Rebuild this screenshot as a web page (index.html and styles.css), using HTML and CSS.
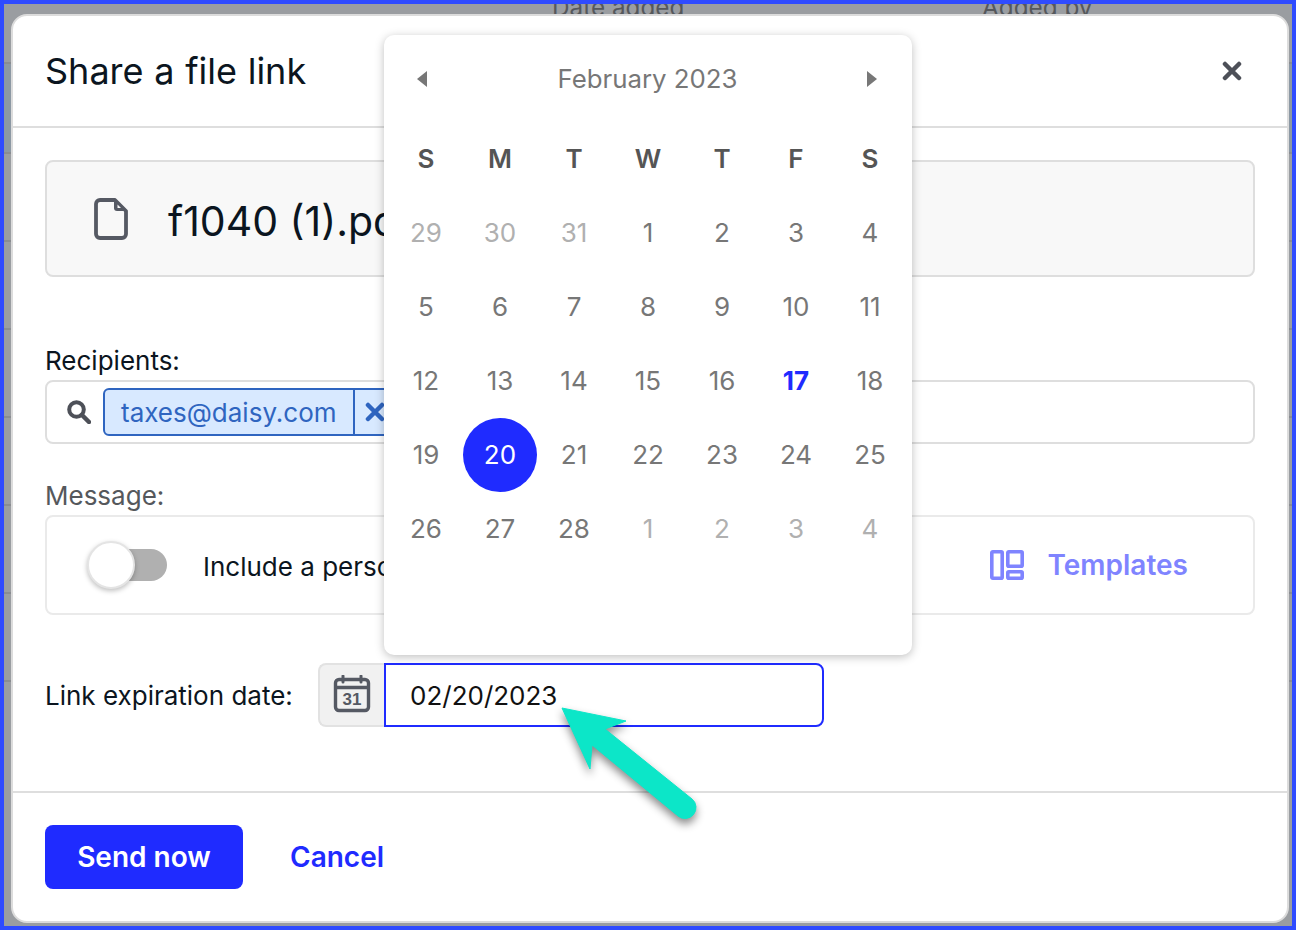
FILE: index.html
```html
<!DOCTYPE html>
<html>
<head>
    <title>Share a file link</title>
    <link rel="stylesheet" href="styles.css">
</head>
<body>
<div class="frame">
    <!-- table behind the dialog -->
    <div class="table-bg">
        <div class="table-head">
            <span class="col-date">Date added</span>
            <span class="col-by">Added by</span>
        </div>
        <div class="table-row tinted"></div>
        <div class="table-row"></div>
        <div class="table-row"></div>
        <div class="table-row"></div>
        <div class="table-row"></div>
        <div class="table-row"></div>
        <div class="table-row"></div>
    </div>

    <div class="modal">
        <div class="modal-header">
            <h1 class="modal-title">Share a file link</h1>
            <svg class="close-icon" width="20" height="20" viewBox="0 0 20 20">
                <path d="M3 3l14 14M17 3L3 17" fill="none" stroke="#4d5058" stroke-width="4.5" stroke-linecap="round"/>
            </svg>
        </div>

        <div class="modal-body">
            <div class="file-box">
                <svg class="file-icon" width="34" height="42" viewBox="0 0 34 42">
                    <path d="M6 2h15l11 11v23a4 4 0 0 1-4 4H6a4 4 0 0 1-4-4V6a4 4 0 0 1 4-4z" fill="none" stroke="#555963" stroke-width="3.800" stroke-linejoin="round"/>
                    <path d="M20 2v8a3 3 0 0 0 3 3h9z" fill="#555963"/>
                    <path d="M23.500 6.500v3.500h3.500z" fill="#f8f8f8"/>
                </svg>
                <span class="file-name">f1040 (1).pdf</span>
            </div>

            <div class="field-label recipients-label">Recipients:</div>
            <div class="recipients">
                <svg class="search-icon" width="24" height="24" viewBox="0 0 24 24">
                    <circle cx="9.500" cy="9.500" r="7.300" fill="none" stroke="#4d5058" stroke-width="4"/>
                    <path d="M15 15l7 7" stroke="#4d5058" stroke-width="4.500" stroke-linecap="round"/>
                </svg>
                <div class="chip">
                    <span class="chip-text">taxes@daisy.com</span>
                    <span class="chip-remove">
                        <svg width="20" height="20" viewBox="0 0 20 20">
                            <path d="M3 3l14 14M17 3L3 17" fill="none" stroke="#2f65c0" stroke-width="4.500" stroke-linecap="round"/>
                        </svg>
                    </span>
                </div>
            </div>

            <div class="field-label message-label">Message:</div>
            <div class="message-box">
                <div class="toggle"><div class="toggle-knob"></div></div>
                <span class="message-text">Include a personal message</span>
                <div class="templates">
                    <svg width="34" height="30" viewBox="0 0 34 30">
                        <rect x="1.800" y="1.800" width="10.400" height="26.400" rx="1" fill="none" stroke="#7f84ff" stroke-width="3.600"/>
                        <rect x="17.800" y="1.800" width="14.400" height="14.400" rx="1" fill="none" stroke="#7f84ff" stroke-width="3.600"/>
                        <rect x="17.800" y="21.800" width="14.400" height="6.400" rx="1" fill="none" stroke="#7f84ff" stroke-width="3.600"/>
                    </svg>
                    <span>Templates</span>
                </div>
            </div>

            <div class="expiry-row">
                <span class="expiry-label">Link expiration date:</span>
                <div class="date-group">
                    <div class="date-prefix">
                        <svg width="38" height="38" viewBox="0 0 38 38">
                            <path d="M10 1v6M28 1v6" stroke="#555963" stroke-width="3" stroke-linecap="round"/>
                            <rect x="2.500" y="4.500" width="33" height="31" rx="3.500" fill="none" stroke="#555963" stroke-width="3.400"/>
                            <path d="M2 12.500h34" stroke="#555963" stroke-width="3.400"/>
                            <text x="19" y="30" text-anchor="middle" class="cal-num">31</text>
                        </svg>
                    </div>
                    <div class="date-input">02/20/2023</div>
                </div>
            </div>
        </div>

        <div class="modal-footer">
            <a class="send-btn">Send now</a>
            <a class="cancel-link">Cancel</a>
        </div>

        <!-- datepicker dropdown -->
        <div class="calendar">
            <div class="cal-head">
                <svg width="10" height="16" viewBox="0 0 10 16"><path d="M10 0v16L0 8z" fill="#777"/></svg>
                <span class="cal-month">February 2023</span>
                <svg width="10" height="16" viewBox="0 0 10 16"><path d="M0 0v16l10-8z" fill="#777"/></svg>
            </div>
            <div class="cal-grid">
                <div class="cal-dow">S</div><div class="cal-dow">M</div><div class="cal-dow">T</div><div class="cal-dow">W</div><div class="cal-dow">T</div><div class="cal-dow">F</div><div class="cal-dow">S</div>
                <div class="cal-day muted">29</div><div class="cal-day muted">30</div><div class="cal-day muted">31</div><div class="cal-day">1</div><div class="cal-day">2</div><div class="cal-day">3</div><div class="cal-day">4</div>
                <div class="cal-day">5</div><div class="cal-day">6</div><div class="cal-day">7</div><div class="cal-day">8</div><div class="cal-day">9</div><div class="cal-day">10</div><div class="cal-day">11</div>
                <div class="cal-day">12</div><div class="cal-day">13</div><div class="cal-day">14</div><div class="cal-day">15</div><div class="cal-day">16</div><div class="cal-day today">17</div><div class="cal-day">18</div>
                <div class="cal-day">19</div><div class="cal-day selected">20</div><div class="cal-day">21</div><div class="cal-day">22</div><div class="cal-day">23</div><div class="cal-day">24</div><div class="cal-day">25</div>
                <div class="cal-day">26</div><div class="cal-day">27</div><div class="cal-day">28</div><div class="cal-day muted">1</div><div class="cal-day muted">2</div><div class="cal-day muted">3</div><div class="cal-day muted">4</div>
            </div>
        </div>
    </div>

    <!-- annotation arrow -->
    <svg class="arrow" width="170" height="150" viewBox="0 0 170 150">
        <path d="M12 8L76 21L55 29L142 99A11 11 0 0 1 128 116L42 45L40 69Z" fill="#0ce6c8" stroke="#0ce6c8" stroke-width="1" stroke-linejoin="round"/>
    </svg>
</div>
</body>
</html>
```

FILE: styles.css
```css
* {
    box-sizing: border-box;
}
html, body {
    margin: 0;
    padding: 0;
}
body {
    font-family: Inter, "Liberation Sans", sans-serif;
    color: #0b1520;
}
a {
    cursor: pointer;
}

.frame {
    position: relative;
    width: 1296px;
    height: 930px;
    overflow: hidden;
    background: #9a9da1;
    border: 4px solid #2f4bff;
}

/* table behind the dialog */
.table-head {
    height: 69px;
    margin-top: -9px;
    padding-left: 548px;
    display: flex;
    border-bottom: 2px solid #8a8d91;
    font-size: 24.300px;
    line-height: 24px;
    color: #55585c;
}
.col-date {
    width: 430px;
}
.table-row {
    height: 88px;
    border-bottom: 2px solid #8a8d91;
}
.table-row.tinted {
    height: 90px;
    background: #8c98a3;
}

/* dialog */
.modal {
    position: absolute;
    left: 7px;
    top: 10px;
    width: 1278px;
    height: 909px;
    display: flex;
    flex-direction: column;
    background: #fff;
    border: 2px solid #dcdcdc;
    border-radius: 16px;
}
.modal-header {
    height: 112px;
    flex: none;
    display: flex;
    align-items: center;
    justify-content: space-between;
    padding: 0 45px 0 32px;
    border-bottom: 2px solid #dedede;
}
.modal-title {
    margin: 0;
    font-size: 36px;
    font-weight: 400;
    word-spacing: 0.600px;
}
.modal-body {
    flex: 1;
    padding: 32px 32px 0;
}
.file-box {
    height: 117px;
    display: flex;
    align-items: center;
    padding-left: 47px;
    background: #f8f8f8;
    border: 2px solid #dedede;
    border-radius: 8px;
}
.file-name {
    margin-left: 40px;
    padding-top: 4px;
    font-size: 41px;
}
.field-label {
    font-size: 26px;
    line-height: 32px;
    margin-bottom: 3px;
}
.recipients-label {
    margin-top: 68px;
}
.message-label {
    margin-top: 36px;
    color: #55585c;
}
.recipients {
    height: 64px;
    display: flex;
    align-items: center;
    padding-left: 20px;
    border: 2px solid #dedede;
    border-radius: 8px;
}
.search-icon {
    margin-right: 12px;
}
.chip {
    height: 48px;
    display: flex;
    align-items: stretch;
    color: #2f65c0;
    background: #d8e9ff;
    border: 2px solid #2f65c0;
    border-radius: 6px;
    font-size: 26px;
}
.chip-text {
    display: flex;
    align-items: center;
    padding: 0 16px;
    border-right: 2px solid #2f65c0;
}
.chip-remove {
    width: 42px;
    display: flex;
    align-items: center;
    padding-left: 10px;
}

.message-box {
    height: 100px;
    display: flex;
    align-items: center;
    padding: 0 65px 0 41px;
    border: 2px solid #eaeaea;
    border-radius: 8px;
}
.toggle {
    width: 79px;
    height: 32px;
    flex: none;
    position: relative;
    background: #b0b0b0;
    border-radius: 16px;
}
.toggle-knob {
    position: absolute;
    left: -1px;
    top: -8px;
    width: 48px;
    height: 48px;
    background: #fff;
    border: 2px solid #e4e4e4;
    border-radius: 50%;
    box-shadow: 0 2px 5px rgba(0, 0, 0, 0.25);
}
.message-text {
    margin-left: 36px;
    padding-top: 3px;
    font-size: 26px;
}
.templates {
    margin-left: auto;
    display: flex;
    align-items: center;
    gap: 24px;
    color: #7f84ff;
    font-size: 28px;
    font-weight: 600;
}

.expiry-row {
    margin-top: 48px;
    display: flex;
    align-items: center;
}
.expiry-label {
    width: 273px;
    font-size: 26px;
}
.date-group {
    display: flex;
    height: 64px;
}
.date-prefix {
    width: 66px;
    padding-bottom: 2px;
    display: flex;
    align-items: center;
    justify-content: center;
    background: #f1f1f1;
    border: 2px solid #e2e2e2;
    border-right: 0;
    border-radius: 8px 0 0 8px;
}
.cal-num {
    font-family: "Liberation Sans", sans-serif;
    font-size: 17px;
    font-weight: 700;
    fill: #555963;
}
.date-input {
    width: 440px;
    display: flex;
    align-items: center;
    padding-left: 24px;
    font-size: 26px;
    color: #111;
    border: 2px solid #1f2bff;
    border-radius: 0 8px 8px 0;
}

.modal-footer {
    height: 130px;
    flex: none;
    display: flex;
    align-items: center;
    gap: 47px;
    padding: 0 32px;
    border-top: 2px solid #dedede;
}
.send-btn {
    width: 198px;
    height: 64px;
    display: flex;
    align-items: center;
    justify-content: center;
    color: #fff;
    background: #1f2bff;
    border-radius: 8px;
    font-size: 28px;
    font-weight: 600;
}
.cancel-link {
    color: #1f2bff;
    font-size: 28px;
    font-weight: 600;
}

/* datepicker */
.calendar {
    position: absolute;
    left: 371px;
    top: 19px;
    width: 528px;
    height: 620px;
    padding: 0 5px;
    background: #fff;
    border-radius: 10px;
    box-shadow: 0 2px 10px rgba(0, 0, 0, 0.25);
}
.cal-head {
    height: 87px;
    display: flex;
    align-items: center;
    justify-content: space-between;
    padding: 0 30px 0 28px;
}
.cal-month {
    margin-left: 1px;
    font-size: 25.800px;
    color: #777;
}
.cal-grid {
    display: grid;
    grid-template-columns: repeat(7, 74px);
    grid-auto-rows: 74px;
}
.cal-dow, .cal-day {
    display: flex;
    align-items: center;
    justify-content: center;
    padding-bottom: 2px;
    font-size: 26px;
}
.cal-dow {
    color: #555;
    font-weight: 600;
}
.cal-day {
    color: #777;
}
.cal-day.muted {
    color: #b0b0b0;
}
.cal-day.today {
    color: #1f2bff;
    font-weight: 700;
}
.cal-day.selected {
    color: #fff;
    background: #1f2bff;
    border-radius: 50%;
}

.arrow {
    position: absolute;
    left: 546px;
    top: 696px;
    filter: drop-shadow(0 5px 4px rgba(0, 0, 0, 0.45));
}
```
